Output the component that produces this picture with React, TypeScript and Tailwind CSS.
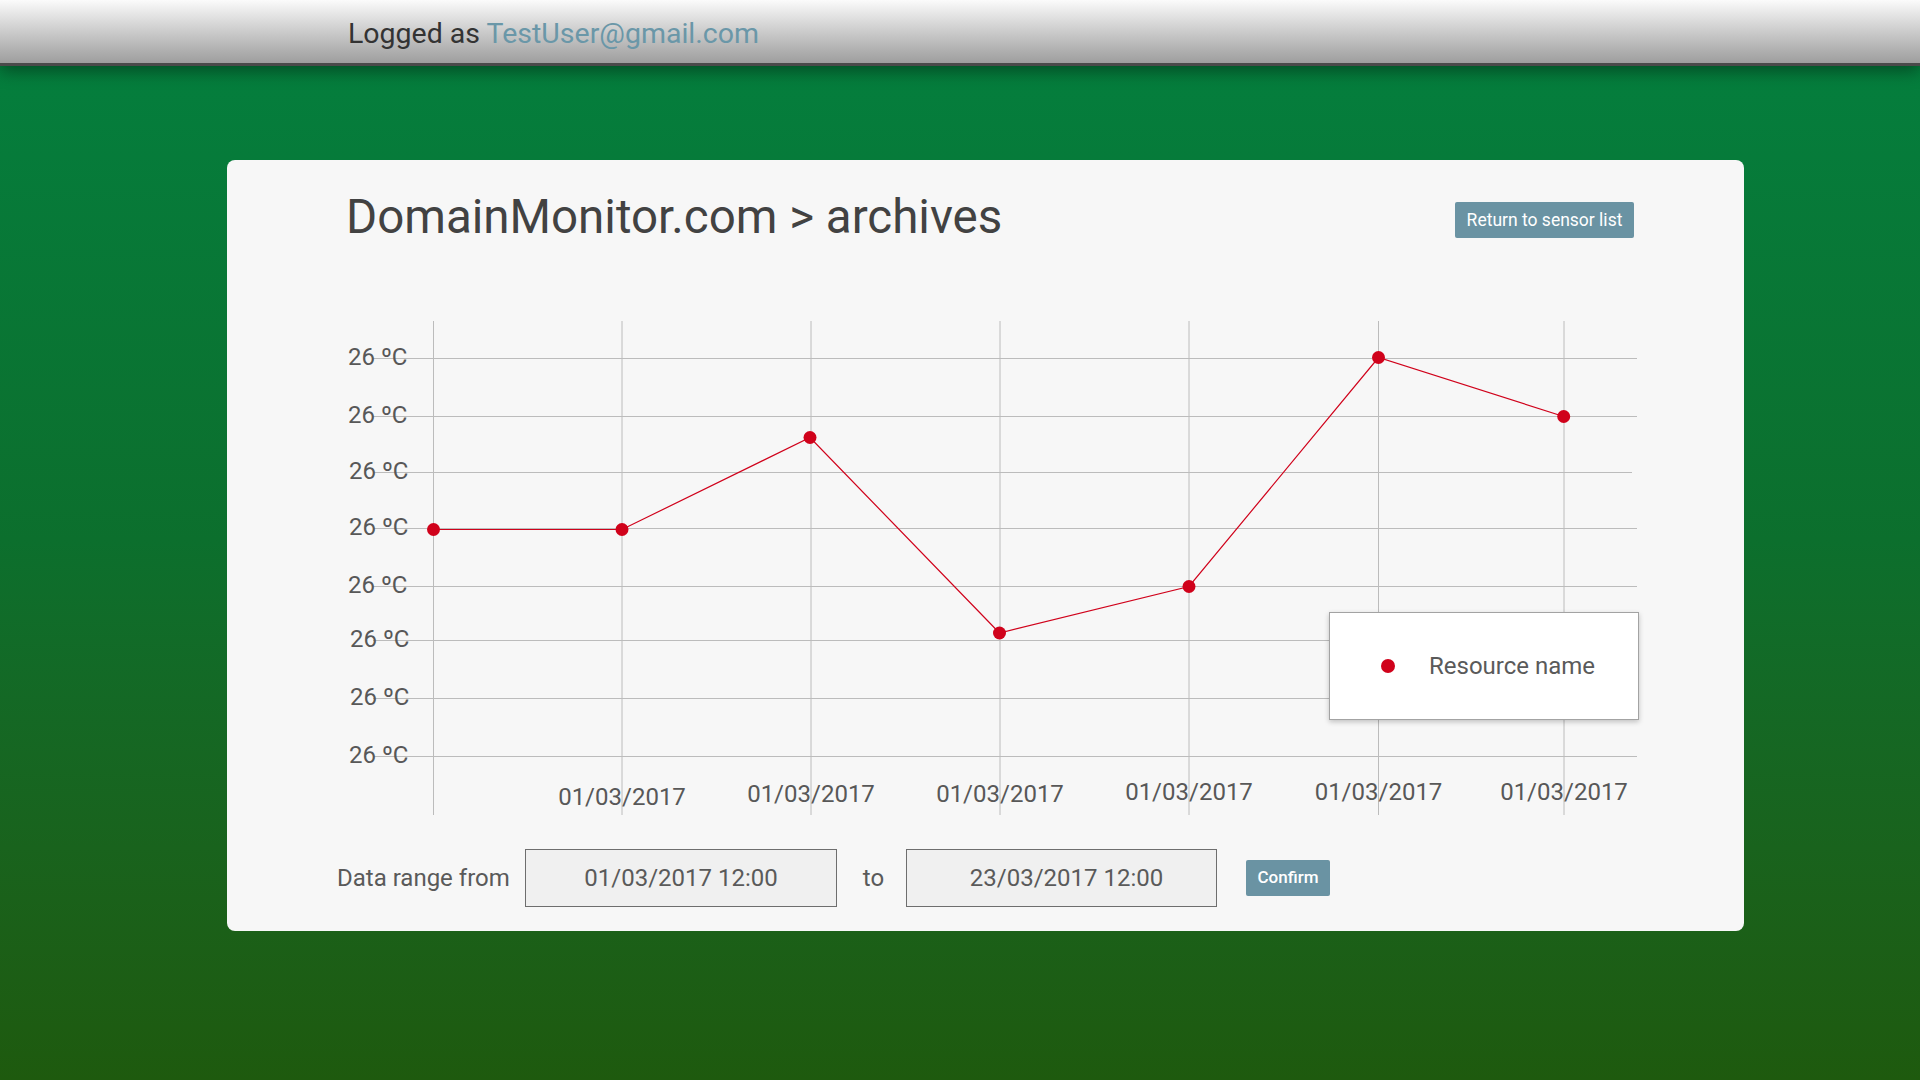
import React from "react";

const vLines = [206.5, 395, 584, 773, 962, 1151.5, 1337];
const hLines = [58.5, 116.5, 172.5, 228.5, 286.5, 340.5, 398.5, 456.5];
const yLabelShift = [0, 0, 1, 1, 0, 2, 2, 1];
const xLabelBase = [504.5, 502, 502, 499.5, 499.5, 499.5];

const points: [number, number][] = [
  [206.5, 229.5],
  [395, 229.5],
  [583, 137.5],
  [772.5, 333],
  [962, 286.5],
  [1151.5, 57.5],
  [1336.7, 116.5],
];

function Chart() {
  return (
    <div className="relative mt-[58.5px] h-[530px] w-[1517px]">
      <svg width={1517} height={530} className="block">
        {vLines.map((x, i) => (
          <line key={"v" + i} x1={x} x2={x} y1={21} y2={515} stroke="#bcbcbc" strokeWidth={1} />
        ))}
        {hLines.map((y, i) => (
          <line key={"h" + i} x1={146} x2={i === 2 ? 1405 : 1410} y1={y} y2={y} stroke="#bcbcbc" strokeWidth={1} />
        ))}
        {hLines.map((y, i) => (
          <text
            key={"yl" + i}
            x={121 + yLabelShift[i]}
            y={y + 6}
            fontSize={24}
            fill="#585858"
            fontFamily="Roboto, sans-serif"
          >
            26 ºC
          </text>
        ))}
        {vLines.slice(1).map((x, i) => (
          <text
            key={"xl" + i}
            x={x}
            y={xLabelBase[i]}
            fontSize={24}
            fill="#585858"
            textAnchor="middle"
            fontFamily="Roboto, sans-serif"
          >
            01/03/2017
          </text>
        ))}
        <polyline
          points={points.map((p) => p.join(",")).join(" ")}
          fill="none"
          stroke="#d0021b"
          strokeWidth={1.2}
        />
        {points.map((p, i) => (
          <circle key={"p" + i} cx={p[0]} cy={p[1]} r={6.5} fill="#d0021b" />
        ))}
      </svg>

      {/* legend */}
      <div className="absolute left-[1102px] top-[312px] flex h-[108px] w-[310px] items-center border border-[#a3a3a3] bg-white shadow-[0_2px_5px_rgba(0,0,0,0.22)]">
        <span className="ml-[51px] h-[14px] w-[14px] rounded-full bg-[#d0021b]" />
        <span className="ml-[34px] text-[24px] leading-none text-[#5a5a5a]">Resource name</span>
      </div>
    </div>
  );
}

export default function App() {
  return (
    <div
      className="h-[1080px] w-full overflow-hidden bg-gradient-to-b from-[#03803f] via-[#0c6f2d] to-[#1e5a0e]"
      style={{ fontFamily: "Roboto, 'Liberation Sans', sans-serif" }}
    >
      {/* Header */}
      <div className="relative z-10 flex h-[66px] items-center border-b-[3px] border-[#4a4a4a] bg-gradient-to-b from-[#fbfbfb] to-[#9e9e9e] pl-[348px] pt-[6px] shadow-[0_5px_16px_rgba(0,0,0,0.4)]">
        <p className="text-[28.5px] leading-none text-[#333333]">
          Logged as <span className="text-[#6a97a8]">TestUser@gmail.com</span>
        </p>
      </div>

      {/* Card */}
      <div className="pl-[227px] pt-[94px]">
        <div className="flex h-[771px] w-[1517px] flex-col rounded-lg bg-[#f7f7f7] pt-[34px]">
          <div className="flex items-start justify-between pl-[119px] pr-[110px]">
            <h1 className="text-[47.5px] leading-none text-[#424242]">DomainMonitor.com &gt; archives</h1>
            <button className="mt-[8px] h-[36px] w-[179px] rounded-[2px] bg-[#6a93a3] text-[17.5px] text-white">
              Return to sensor list
            </button>
          </div>

          <Chart />

          <div className="mt-[19px] flex items-center pl-[110px]">
            <span className="w-[188px] text-[24px] leading-none text-[#5a5a5a]">Data range from</span>
            <div className="flex h-[58px] w-[312px] items-center justify-center border border-[#6e6e6e] bg-[#f0f0f0] text-[24px] text-[#5a5a5a]">
              01/03/2017 12:00
            </div>
            <span className="w-[69px] pl-[4px] text-center text-[24px] leading-none text-[#5a5a5a]">to</span>
            <div className="flex h-[58px] w-[311px] items-center justify-center border border-[#6e6e6e] bg-[#f0f0f0] pl-[10px] text-[24px] text-[#5a5a5a]">
              23/03/2017 12:00
            </div>
            <button className="ml-[29px] h-[36px] w-[84px] rounded-[2px] bg-[#6a93a3] text-[17px] font-medium text-white">
              Confirm
            </button>
          </div>
        </div>
      </div>
    </div>
  );
}
